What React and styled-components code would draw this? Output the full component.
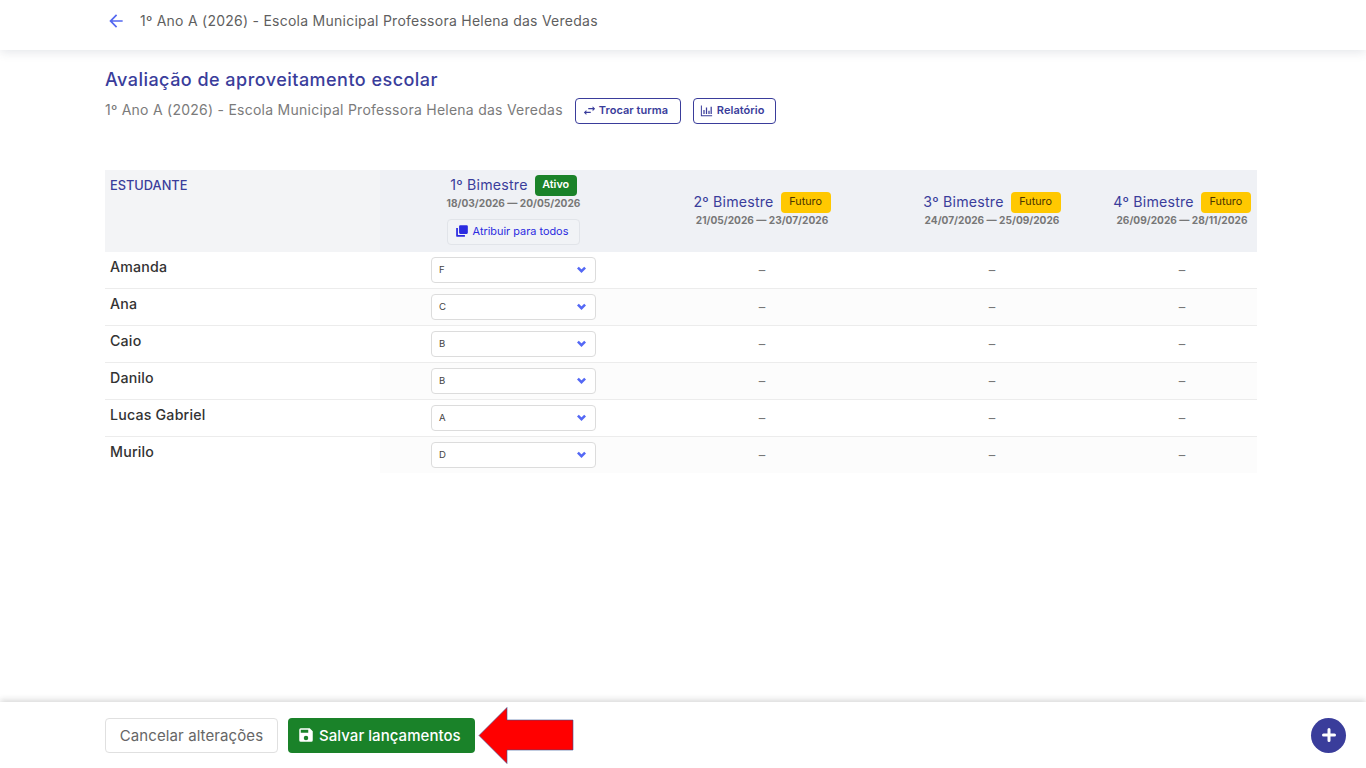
import React from "react";
import styled, { createGlobalStyle } from "styled-components";

const Global = createGlobalStyle`
  * { box-sizing: border-box; }
  html, body { margin: 0; padding: 0; background: #fff; }
  body { font-family: Inter, "Open Sans", "Liberation Sans", sans-serif; }
`;

const Page = styled.div`
  position: relative;
  display: flex;
  flex-direction: column;
  height: 768px;
  overflow: hidden;
`;
const TopBar = styled.header`
  height: 50px;
  flex: none;
  display: flex;
  align-items: flex-start;
  padding: 11px 0 0 106px;
  gap: 14px;
  background: #fff;
  box-shadow: 0 2px 10px rgba(60, 70, 100, 0.14);
  position: relative;
`;
const BackIcon = styled.svg`
  width: 20px;
  height: 20px;
  fill: #5468f0;
`;
const TopTitle = styled.div`
  margin-top: 1px;
  font-size: 14px;
  line-height: 18px;
  color: #5f5f5f;
  letter-spacing: 0.25px;
`;
const Main = styled.main`
  flex: 1;
  padding: 20px 109px 0 105px;
`;
const Heading = styled.h1`
  margin: 0;
  font-size: 18px;
  font-weight: 500;
  line-height: 20px;
  color: #3a3d9b;
  letter-spacing: 0.47px;
`;
const SubRow = styled.div`
  display: flex;
  align-items: center;
  height: 26px;
  margin-top: 8px;
`;
const SubTitle = styled.span`
  font-size: 14px;
  color: #7b7b7b;
  letter-spacing: 0.25px;
  margin-right: 12px;
  padding-bottom: 3px;
`;
const OutlineButton = styled.button`
  height: 26px;
  width: ${(p) => p.$w}px;
  margin-right: 12px;
  display: inline-flex;
  align-items: center;
  gap: ${(p) => p.$gap}px;
  padding: 0 0 2px ${(p) => p.$pl}px;
  background: #fff;
  border: 1px solid #3a3d9b;
  border-radius: 4px;
  color: #3a3d9b;
  font: 600 11px Inter, sans-serif;
  letter-spacing: 0.05px;
`;
const SmallIcon = styled.svg`
  width: ${(p) => p.$s}px;
  height: ${(p) => p.$s}px;
  fill: currentColor;
  flex: none;
`;
const Table = styled.div`
  margin-top: 46px;
  width: 1152px;
`;
const Columns = styled.div`
  display: grid;
  grid-template-columns: 275px 267px 230px 230px 150px;
`;
const HeadRow = styled(Columns)`
  height: 82px;
  background: #eff1f5;
`;
const StudentHead = styled.div`
  background: #f3f4f6;
  padding: 8px 5px 0;
  font-size: 12.8px;
  font-weight: 500;
  line-height: 16px;
  color: #3a3d9b;
`;
const TermHead = styled.div`
  display: flex;
  flex-direction: column;
  align-items: center;
  padding-top: ${(p) => (p.$active ? 5 : 22)}px;
`;
const TermTitleRow = styled.div`
  display: flex;
  align-items: center;
  gap: 7px;
  height: 21px;
`;
const TermName = styled.span`
  font-size: 14.2px;
  color: #3a3d9b;
  letter-spacing: 0.2px;
  padding-bottom: 2px;
`;
const Badge = styled.span`
  display: inline-flex;
  align-items: center;
  justify-content: center;
  height: 21px;
  width: ${(p) => p.$w}px;
  padding-bottom: 2px;
  border-radius: 4px;
  font-size: ${(p) => (p.$active ? 10.8 : 10.8)}px;
  font-weight: ${(p) => (p.$active ? 600 : 400)};
  background: ${(p) => (p.$active ? "#1a8229" : "#ffc800")};
  color: ${(p) => (p.$active ? "#fff" : "#4a3300")};
`;
const TermDates = styled.div`
  font-size: 10.15px;
  font-weight: 700;
  line-height: 14px;
  color: #777;
`;
const ApplyButton = styled.button`
  margin-top: 9px;
  width: 133px;
  height: 26px;
  display: inline-flex;
  align-items: center;
  justify-content: center;
  gap: 4px;
  padding: 0 4px 2px 0;
  background: #f1f3f6;
  border: 1px solid #e1e4e9;
  border-radius: 4px;
  color: #2b2be0;
  font: 400 10.9px Inter, sans-serif;
`;
const Row = styled(Columns)`
  height: ${(p) => (p.$last ? 36 : 37)}px;
  border-bottom: ${(p) => (p.$last ? "none" : "1px solid #ececec")};
  background: ${(p) => (p.$even ? "#fcfcfc" : "#fff")};
`;
const NameCell = styled.div`
  background: #fff;
  padding: 6px 5px 0;
  font-size: 14.2px;
  font-weight: 500;
  line-height: 18px;
  color: #333;
  letter-spacing: 0.2px;
`;
const GradeCell = styled.div`
  display: flex;
  justify-content: center;
  padding-top: 5px;
`;
const Dash = styled.div`
  text-align: center;
  padding-top: 10px;
  font-size: 13px;
  line-height: 16px;
  color: #777;
`;
const GradeSelect = styled.div`
  width: 165px;
  height: 26px;
  display: flex;
  align-items: center;
  justify-content: space-between;
  padding: 0 9px 2px 7px;
  background: #fff;
  border: 1px solid #dcdcdc;
  border-radius: 4px;
  font-size: 9.6px;
  color: #444;
`;
const Chevron = styled.svg`
  width: 9px;
  height: 7px;
  fill: none;
  stroke: #5468f5;
  stroke-width: 2.8;
`;
const Footer = styled.footer`
  height: 66px;
  flex: none;
  display: flex;
  align-items: center;
  padding: 0 20px 0 105px;
  gap: 10px;
  background: #fff;
  box-shadow: 0 -2px 6px rgba(40, 40, 40, 0.18);
  position: relative;
`;
const CancelButton = styled.button`
  width: 173px;
  height: 35px;
  background: #fff;
  border: 1px solid #e0e0e0;
  border-radius: 4px;
  color: #666;
  font: 400 15px Inter, sans-serif;
  letter-spacing: 0.1px;
  padding: 0;
`;
const SaveButton = styled.button`
  width: 187px;
  height: 35px;
  display: inline-flex;
  align-items: center;
  gap: 4px;
  background: #1a8229;
  border: none;
  border-radius: 4px;
  color: #fff;
  font: 500 15px Inter, sans-serif;
  letter-spacing: 0.05px;
  padding: 0 0 0 9px;
`;
const Fab = styled.button`
  margin-left: auto;
  width: 35px;
  height: 35px;
  border-radius: 50%;
  border: none;
  padding: 0;
  display: flex;
  align-items: center;
  justify-content: center;
  background: #3a3d9b;
  color: #fff;
`;
const CalloutArrow = styled.svg`
  position: absolute;
  left: 478px;
  top: 706px;
  width: 96px;
  height: 59px;
`;

const students = [
  ["Amanda", "F"],
  ["Ana", "C"],
  ["Caio", "B"],
  ["Danilo", "B"],
  ["Lucas Gabriel", "A"],
  ["Murilo", "D"],
];
const terms = [
  ["2º Bimestre", "21/05/2026 — 23/07/2026"],
  ["3º Bimestre", "24/07/2026 — 25/09/2026"],
  ["4º Bimestre", "26/09/2026 — 28/11/2026"],
];

export default function App() {
  return (
    <Page>
      <Global />
      <TopBar>
        <BackIcon viewBox="0 0 24 24">
          <path d="M20 11H7.83l5.59-5.59L12 4l-8 8 8 8 1.41-1.41L7.83 13H20z" />
        </BackIcon>
        <TopTitle>1º Ano A (2026) - Escola Municipal Professora Helena das Veredas</TopTitle>
      </TopBar>
      <Main>
        <Heading>Avaliação de aproveitamento escolar</Heading>
        <SubRow>
          <SubTitle>1º Ano A (2026) - Escola Municipal Professora Helena das Veredas</SubTitle>
          <OutlineButton $w={106} $pl={6} $gap={2}>
            <SmallIcon viewBox="0 0 24 24" $s={15}>
              <path d="M6.99 11 3 15l3.99 4v-3H14v-2H6.99zM21 9l-3.99-4v3H10v2h7.01v3z" />
            </SmallIcon>
            Trocar turma
          </OutlineButton>
          <OutlineButton $w={83} $pl={5} $gap={3}>
            <SmallIcon viewBox="0 0 24 24" $s={15}>
              <path d="M3 4h1.6v15.4H21V21H3zM7 11h2v6.5H7zM11 7h2v10.5h-2zM15 12.5h2v5h-2zM18.5 6h2v11.5h-2z" />
            </SmallIcon>
            Relatório
          </OutlineButton>
        </SubRow>
        <Table>
          <HeadRow>
            <StudentHead>ESTUDANTE</StudentHead>
            <TermHead $active>
              <TermTitleRow>
                <TermName>1º Bimestre</TermName>
                <Badge $active $w={42}>Ativo</Badge>
              </TermTitleRow>
              <TermDates>18/03/2026 — 20/05/2026</TermDates>
              <ApplyButton>
                <SmallIcon viewBox="0 0 24 24" $s={14}>
                  <path d="M9 2h11a2 2 0 0 1 2 2v11a2 2 0 0 1-2 2H9a2 2 0 0 1-2-2V4a2 2 0 0 1 2-2zM2 7h3v12h12v3H4a2 2 0 0 1-2-2z" />
                </SmallIcon>
                Atribuir para todos
              </ApplyButton>
            </TermHead>
            {terms.map(([name, dates]) => (
              <TermHead key={name}>
                <TermTitleRow>
                  <TermName>{name}</TermName>
                  <Badge $w={50}>Futuro</Badge>
                </TermTitleRow>
                <TermDates>{dates}</TermDates>
              </TermHead>
            ))}
          </HeadRow>
          {students.map(([name, grade], i) => (
            <Row key={name} $even={i % 2 === 1} $last={i === students.length - 1}>
              <NameCell>{name}</NameCell>
              <GradeCell>
                <GradeSelect>
                  {grade}
                  <Chevron viewBox="0 0 10 7">
                    <path d="M1 1.3 5 5.3 9 1.3" />
                  </Chevron>
                </GradeSelect>
              </GradeCell>
              <Dash>–</Dash>
              <Dash>–</Dash>
              <Dash>–</Dash>
            </Row>
          ))}
        </Table>
      </Main>
      <Footer>
        <CancelButton>Cancelar alterações</CancelButton>
        <SaveButton>
          <SmallIcon viewBox="0 0 24 24" $s={18}>
            <path d="M17 3H5a2 2 0 0 0-2 2v14a2 2 0 0 0 2 2h14a2 2 0 0 0 2-2V7l-4-4zm-5 16a3 3 0 1 1 0-6 3 3 0 0 1 0 6zm3-10H5V5h10v4z" />
          </SmallIcon>
          Salvar lançamentos
        </SaveButton>
        <Fab aria-label="Adicionar">
          <svg width="14" height="14" viewBox="0 0 14 14">
            <path d="M7 1.5v11M1.5 7h11" stroke="#fff" strokeWidth="3" strokeLinecap="round" />
          </svg>
        </Fab>
      </Footer>
      <CalloutArrow viewBox="0 0 96 59">
        <path d="M1 29.5 29 1.5V14H95V44H29V57.5Z" fill="#ff0000" stroke="#2f5597" strokeWidth="0.6" />
      </CalloutArrow>
    </Page>
  );
}
